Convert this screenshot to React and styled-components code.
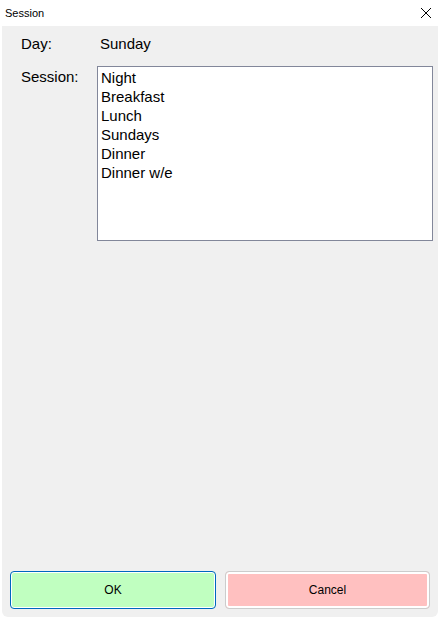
import React from 'react';
import styled, { createGlobalStyle } from 'styled-components';

const GlobalStyle = createGlobalStyle`
  html, body {
    margin: 0;
    padding: 0;
    background: #ffffff;
  }
  body {
    font-family: "Liberation Sans", Arial, sans-serif;
    color: #000000;
  }
`;

const SESSIONS = ['Night', 'Breakfast', 'Lunch', 'Sundays', 'Dinner', 'Dinner w/e'];

const Window = styled.div`
  width: 441px;
  height: 619px;
  display: flex;
  flex-direction: column;
  box-sizing: border-box;
  background: #ffffff;
`;

const TitleBar = styled.div`
  height: 26px;
  flex: none;
  display: flex;
  align-items: center;
  justify-content: space-between;
  padding: 0 9px 0 5px;
`;

const Title = styled.span`
  font-size: 11px;
  color: #000000;
  margin-top: -1px;
`;

const CloseButton = styled.div`
  width: 12px;
  height: 12px;
  display: flex;
  align-items: center;
  justify-content: center;
  margin-top: -1px;
`;

const Panel = styled.div`
  flex: 1;
  margin: 0 3px 2px 2px;
  background: #f0f0f0;
  border-radius: 0 0 6px 6px;
  display: flex;
  flex-direction: column;
  padding: 8px 6px 8px 8px;
  box-sizing: border-box;
`;

const Form = styled.div`
  display: grid;
  grid-template-columns: 76px 336px;
  row-gap: 13px;
  padding-left: 11px;
  font-size: 15px;
  line-height: 19px;
`;

const Label = styled.div`
  padding-top: ${props => props.$offset || 0}px;
`;

const Value = styled.div`
  padding-left: 3px;
`;

const ListBox = styled.div`
  height: 175px;
  box-sizing: border-box;
  border: 1px solid #82879a;
  background: #ffffff;
  padding: 1px 3px;
`;

const ListItem = styled.div`
  height: 19px;
  white-space: nowrap;
`;

const Spacer = styled.div`
  flex: 1;
`;

const ButtonRow = styled.div`
  display: grid;
  grid-template-columns: 206px 205px;
  column-gap: 9px;
`;

const Button = styled.div`
  height: 38px;
  box-sizing: border-box;
  border: 1px solid ${props => props.$border};
  border-radius: 4px;
  background: ${props => props.$fill};
  box-shadow: inset 0 0 0 ${props => props.$ring}px #ffffff;
  display: flex;
  align-items: center;
  justify-content: center;
  font-size: 12px;
  color: #000000;
`;

export default function App() {
  return (
    <>
      <GlobalStyle />
      <Window>
        <TitleBar>
          <Title>Session</Title>
          <CloseButton>
            <svg width="12" height="12" viewBox="0 0 12 12">
              <path d="M1 1 L11 11 M11 1 L1 11" stroke="#000" strokeWidth="1" fill="none" />
            </svg>
          </CloseButton>
        </TitleBar>
        <Panel>
          <Form>
            <Label>Day:</Label>
            <Value>Sunday</Value>
            <Label $offset={1}>Session:</Label>
            <ListBox>
              {SESSIONS.map(item => (
                <ListItem key={item}>{item}</ListItem>
              ))}
            </ListBox>
          </Form>
          <Spacer />
          <ButtonRow>
            <Button $border="#0067c0" $fill="#c0ffc0" $ring={1}>OK</Button>
            <Button $border="#cccccc" $fill="#ffc0c0" $ring={2}>Cancel</Button>
          </ButtonRow>
        </Panel>
      </Window>
    </>
  );
}
